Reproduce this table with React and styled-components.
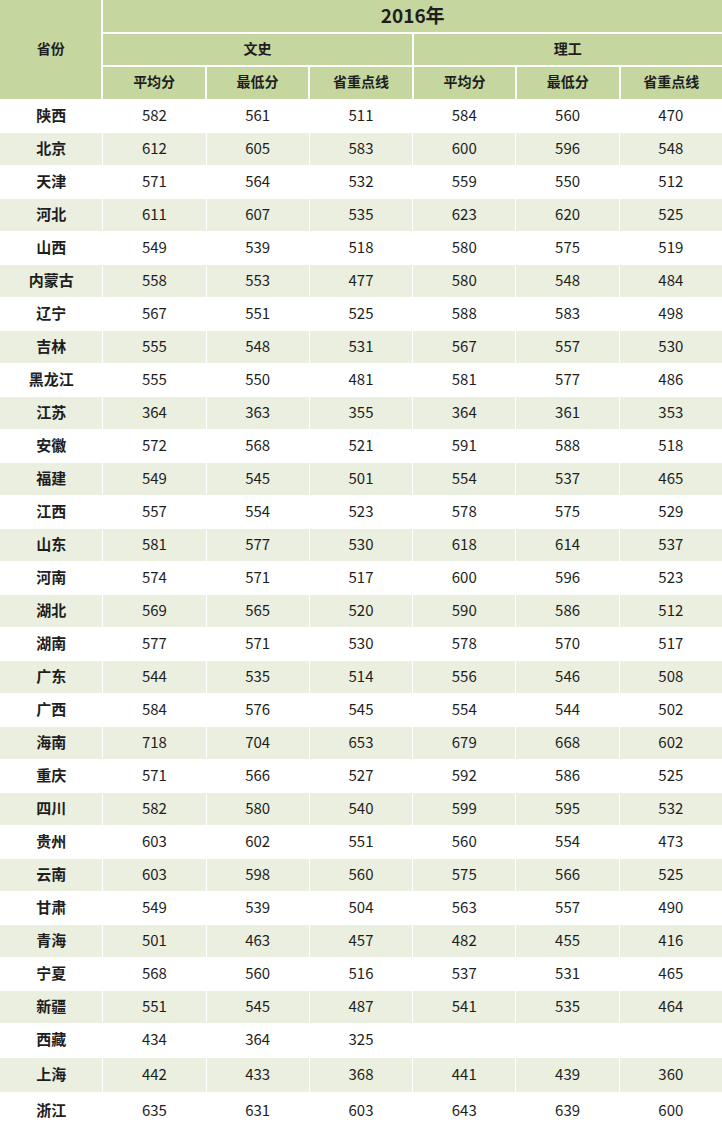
import React from "react";
import styled, { createGlobalStyle } from "styled-components";

const Global = createGlobalStyle`
  html, body { margin: 0; padding: 0; background: #ffffff; }
  body { font-family: "Noto Sans CJK SC", "Noto Sans", sans-serif; color: #1e1e1e; }
`;

const Sheet = styled.div`
  width: 722px;
  display: flex;
  flex-direction: column;
  background: #ffffff;
`;

const Header = styled.div`
  display: grid;
  grid-template-columns: repeat(7, 1fr);
  grid-template-rows: 32px 31px 32px;
  gap: 2px;
  background: #ffffff;
`;

const HeadCell = styled.div`
  background: #c6d69f;
  display: flex;
  align-items: center;
  justify-content: center;
  padding-bottom: ${(p) => (p.$big ? 3 : 4)}px;
  font-weight: 700;
  font-size: ${(p) => (p.$big ? 19 : 14)}px;
  line-height: 1;
  grid-column: ${(p) => p.$col || "auto"};
  grid-row: ${(p) => p.$row || "auto"};
`;

const Row = styled.div`
  display: grid;
  grid-template-columns: repeat(7, 1fr);
  column-gap: 1px;
  margin-top: 1px;
  height: ${(p) => p.$h}px;
`;

const Cell = styled.div`
  background: ${(p) => (p.$alt ? "#eaefdf" : "#ffffff")};
  display: flex;
  align-items: center;
  justify-content: center;
  padding-bottom: 4px;
  font-size: 15px;
  line-height: 1;
  font-weight: ${(p) => (p.$name ? 700 : 400)};
`;

const rows = [
  ["陕西", 582, 561, 511, 584, 560, 470],
  ["北京", 612, 605, 583, 600, 596, 548],
  ["天津", 571, 564, 532, 559, 550, 512],
  ["河北", 611, 607, 535, 623, 620, 525],
  ["山西", 549, 539, 518, 580, 575, 519],
  ["内蒙古", 558, 553, 477, 580, 548, 484],
  ["辽宁", 567, 551, 525, 588, 583, 498],
  ["吉林", 555, 548, 531, 567, 557, 530],
  ["黑龙江", 555, 550, 481, 581, 577, 486],
  ["江苏", 364, 363, 355, 364, 361, 353],
  ["安徽", 572, 568, 521, 591, 588, 518],
  ["福建", 549, 545, 501, 554, 537, 465],
  ["江西", 557, 554, 523, 578, 575, 529],
  ["山东", 581, 577, 530, 618, 614, 537],
  ["河南", 574, 571, 517, 600, 596, 523],
  ["湖北", 569, 565, 520, 590, 586, 512],
  ["湖南", 577, 571, 530, 578, 570, 517],
  ["广东", 544, 535, 514, 556, 546, 508],
  ["广西", 584, 576, 545, 554, 544, 502],
  ["海南", 718, 704, 653, 679, 668, 602],
  ["重庆", 571, 566, 527, 592, 586, 525],
  ["四川", 582, 580, 540, 599, 595, 532],
  ["贵州", 603, 602, 551, 560, 554, 473],
  ["云南", 603, 598, 560, 575, 566, 525],
  ["甘肃", 549, 539, 504, 563, 557, 490],
  ["青海", 501, 463, 457, 482, 455, 416],
  ["宁夏", 568, 560, 516, 537, 531, 465],
  ["新疆", 551, 545, 487, 541, 535, 464],
  ["西藏", 434, 364, 325, "", "", ""],
  ["上海", 442, 433, 368, 441, 439, 360],
  ["浙江", 635, 631, 603, 643, 639, 600],
];

const heightOf = (i) => (i === 28 ? 33 : i === 29 ? 34 : i === 30 ? 37 : 32);

const sub = ["平均分", "最低分", "省重点线"];

export default function App() {
  return (
    <>
      <Global />
      <Sheet>
        <Header>
          <HeadCell $col="1" $row="1 / 4">省份</HeadCell>
          <HeadCell $col="2 / 8" $row="1" $big>2016年</HeadCell>
          <HeadCell $col="2 / 5" $row="2">文史</HeadCell>
          <HeadCell $col="5 / 8" $row="2">理工</HeadCell>
          {[...sub, ...sub].map((s, i) => (
            <HeadCell key={i} $row="3">{s}</HeadCell>
          ))}
        </Header>
        {rows.map((r, i) => (
          <Row key={r[0]} $h={heightOf(i)}>
            <Cell $name $alt={i % 2 === 1}>{r[0]}</Cell>
            {r.slice(1).map((v, j) => (
              <Cell key={j} $alt={i % 2 === 1}>{v}</Cell>
            ))}
          </Row>
        ))}
      </Sheet>
    </>
  );
}
